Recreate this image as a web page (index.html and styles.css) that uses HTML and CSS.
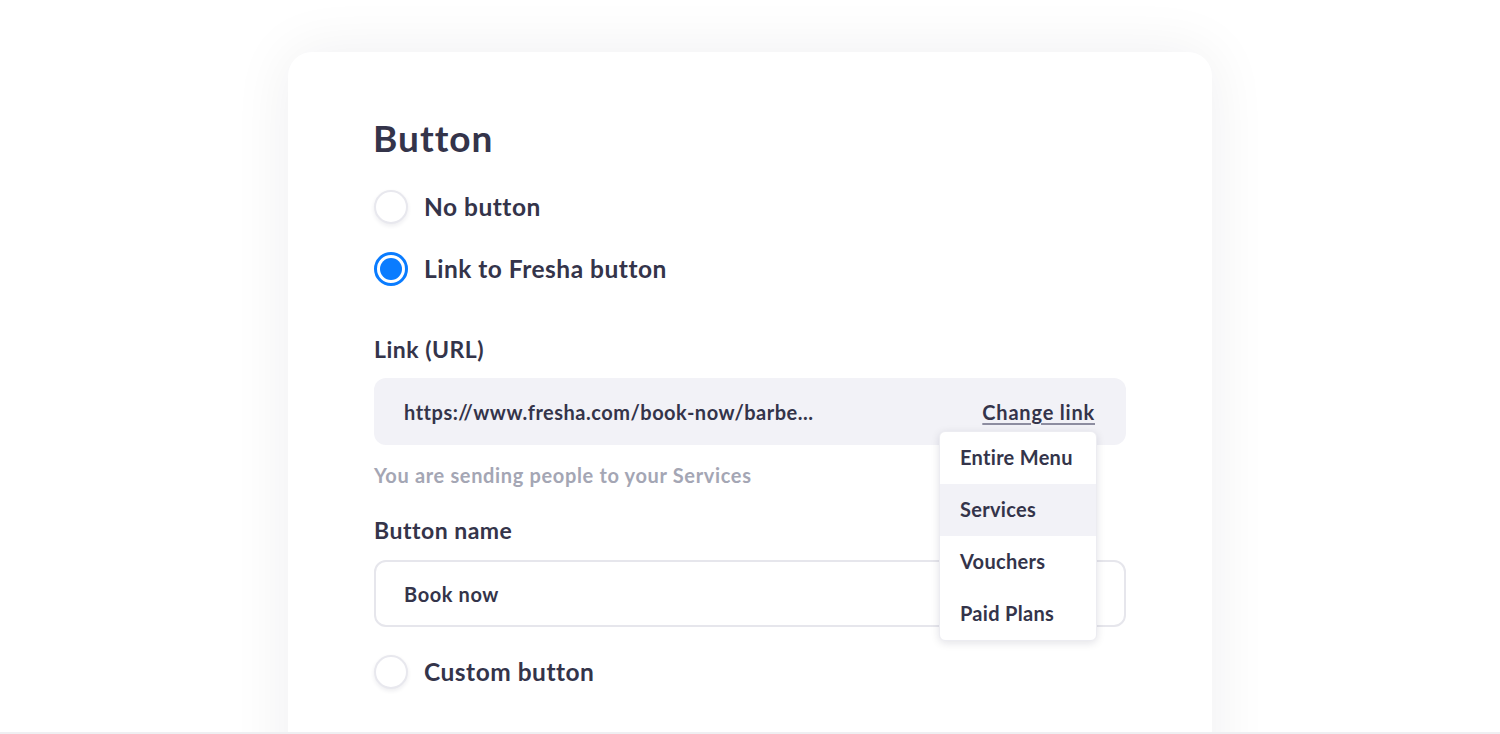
FILE: index.html
```html
<!DOCTYPE html>
<html lang="en">
<head>
<meta charset="utf-8">
<title>Button settings</title>
<link rel="stylesheet" href="styles.css">
</head>
<body>
<div class="page">
  <section class="card">
    <h2 class="title">Button</h2>
    <label class="radio-row row-first">
      <span class="radio"></span>
      <span class="radio-label">No button</span>
    </label>
    <label class="radio-row row-second">
      <span class="radio radio-on"><span class="dot"></span></span>
      <span class="radio-label">Link to Fresha button</span>
    </label>
    <div class="field-label label-link">Link (URL)</div>
    <div class="url-box">
      <span class="url-text">https://www.fresha.com/book-now/barbe...</span>
      <span class="change-link">Change link</span>
      <ul class="menu">
        <li class="menu-item">Entire Menu</li>
        <li class="menu-item active">Services</li>
        <li class="menu-item">Vouchers</li>
        <li class="menu-item">Paid Plans</li>
      </ul>
    </div>
    <div class="helper">You are sending people to your Services</div>
    <div class="field-label label-name">Button name</div>
    <div class="text-input">Book now</div>
    <label class="radio-row row-custom">
      <span class="radio"></span>
      <span class="radio-label">Custom button</span>
    </label>
  </section>
</div>
</body>
</html>
```
FILE: styles.css
```css
* { box-sizing: border-box; }
html, body { margin: 0; padding: 0; background: #ffffff; }
body {
  font-family: "Lato", "Noto Sans", sans-serif;
  color: #34344a;
}
.page {
  height: 734px;
  overflow: hidden;
  border-bottom: 2px solid #efeff2;
  padding-top: 52px;
}
.card {
  width: 924px;
  height: 760px;
  margin: 0 auto;
  background: #fff;
  border-radius: 24px;
  box-shadow: 0 0 60px rgba(20, 20, 40, 0.07);
  padding: 65px 86px 0 86px;
  display: flex;
  flex-direction: column;
}
.title {
  margin: 0 0 0 -1px;
  font-size: 37px;
  line-height: 42px;
  font-weight: 700;
  height: 44px;
  letter-spacing: 1px;
}
.radio-row {
  display: flex;
  align-items: center;
  height: 34px;
  gap: 16px;
}
.row-first { margin-top: 29px; }
.row-second { margin-top: 28px; }
.row-custom { margin-top: 28px; }
.radio {
  width: 34px;
  height: 34px;
  border-radius: 50%;
  border: 2px solid #e8e8ee;
  background: #fff;
  box-shadow: 0 2px 4px rgba(30, 30, 60, 0.08);
  flex: none;
  display: flex;
  align-items: center;
  justify-content: center;
}
.radio-on {
  border: 3px solid #0a7cff;
  box-shadow: none;
}
.dot {
  width: 22px;
  height: 22px;
  border-radius: 50%;
  background: #0a7cff;
}
.radio-label {
  font-size: 24.5px;
  font-weight: 700;
  line-height: 32px;
  letter-spacing: 0.5px;
}
.field-label {
  font-size: 23px;
  font-weight: 700;
  line-height: 28px;
  height: 28px;
  letter-spacing: 0.5px;
}
.label-link { margin-top: 49px; }
.label-name { margin-top: 28px; }
.url-box {
  position: relative;
  margin-top: 15px;
  height: 67px;
  border-radius: 12px;
  background: #f2f2f7;
  display: flex;
  align-items: center;
  justify-content: space-between;
  padding: 0 31px 0 30px;
}
.url-text, .change-link {
  font-size: 20px;
  font-weight: 700;
  line-height: 24px;
  letter-spacing: 0.5px;
}
.change-link {
  letter-spacing: 0.8px;
  text-decoration: underline;
  text-decoration-color: #8d8da0;
  text-decoration-thickness: 2px;
  text-underline-offset: 3px;
}
.menu {
  position: absolute;
  top: 53px;
  right: 29px;
  width: 158px;
  margin: 0;
  padding: 0;
  list-style: none;
  background: #fff;
  border: 1px solid #ececf1;
  border-radius: 6px;
  box-shadow: 0 2px 8px rgba(20, 20, 50, 0.12);
  overflow: hidden;
  z-index: 2;
}
.menu-item {
  height: 52px;
  line-height: 50px;
  padding-left: 20px;
  font-size: 20px;
  font-weight: 700;
  letter-spacing: 0.3px;
}
.menu-item.active { background: #f2f2f7; }
.helper {
  margin-top: 17px;
  font-size: 20px;
  line-height: 26px;
  height: 26px;
  color: #a4a6b4;
  font-weight: 700;
  letter-spacing: 0.65px;
}
.text-input {
  margin-top: 16px;
  height: 67px;
  border: 2px solid #e6e6ec;
  border-radius: 12px;
  padding: 0 28px;
  display: flex;
  align-items: center;
  font-size: 20px;
  font-weight: 700;
  letter-spacing: 0.6px;
}
```
